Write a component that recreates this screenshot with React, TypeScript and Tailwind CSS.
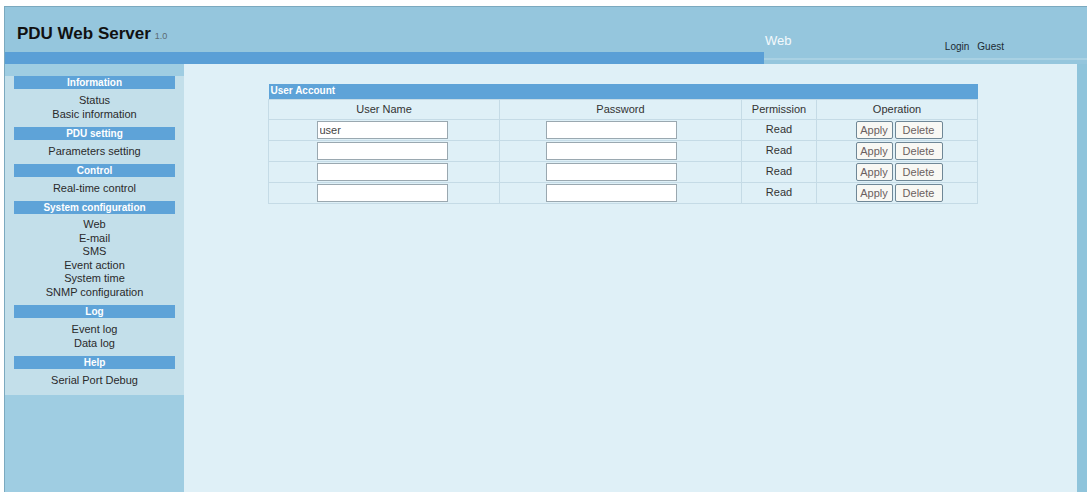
const menu: { title: string; items: string[]; lh: string }[] = [
  { title: 'Information', items: ['Status', 'Basic information'], lh: 'leading-[14px]' },
  { title: 'PDU setting', items: ['Parameters setting'], lh: 'leading-[14px]' },
  { title: 'Control', items: ['Real-time control'], lh: 'leading-[14px]' },
  {
    title: 'System configuration',
    items: ['Web', 'E-mail', 'SMS', 'Event action', 'System time', 'SNMP configuration'],
    lh: 'leading-[13.5px]',
  },
  { title: 'Log', items: ['Event log', 'Data log'], lh: 'leading-[14px]' },
  { title: 'Help', items: ['Serial Port Debug'], lh: 'leading-[14px]' },
];

const users = ['user', '', '', ''];

function Sidebar() {
  return (
    <div className="w-[179px] shrink-0 bg-[#9fcde2] pt-[12px]">
      <div className="bg-[#c3dfea] pb-[2px]">
        {menu.map((group) => (
          <div key={group.title}>
            <div className="mx-[9px] h-[13px] bg-[#5ea3d8] text-center text-[10px] leading-[13px] font-bold text-white">
              {group.title}
            </div>
            <div className={`pt-[4px] pb-[6px] text-center text-[11px] text-[#2a2a2a] ${group.lh}`}>
              {group.items.map((item) => (
                <div key={item}>{item}</div>
              ))}
            </div>
          </div>
        ))}
      </div>
    </div>
  );
}

function UserTable() {
  return (
    <table className="w-[710px] border-collapse text-[11px] text-[#333]">
      <thead>
        <tr>
          <th colSpan={4} className="h-[15px] bg-[#5ea3d8] px-[2px] text-left text-[10px] leading-[14px] font-bold text-white">
            User Account
          </th>
        </tr>
        <tr className="h-[20px]">
          <th className="w-[231px] border border-[#c5dbe6] font-normal">User Name</th>
          <th className="w-[242px] border border-[#c5dbe6] font-normal">Password</th>
          <th className="w-[75px] border border-[#c5dbe6] font-normal">Permission</th>
          <th className="border border-[#c5dbe6] font-normal">Operation</th>
        </tr>
      </thead>
      <tbody>
        {users.map((name, i) => (
          <tr key={i} className="h-[21px]">
            <td className="border border-[#c5dbe6] text-center">
              <input
                defaultValue={name}
                className="ml-[-4px] h-[18px] w-[131px] border border-[#9aa8b0] bg-white px-[2px] align-middle text-[11px] text-[#444] outline-none"
              />
            </td>
            <td className="border border-[#c5dbe6] text-center">
              <input
                type="password"
                className="ml-[-18px] h-[18px] w-[131px] border border-[#9aa8b0] bg-white align-middle outline-none"
              />
            </td>
            <td className="border border-[#c5dbe6] text-center">Read</td>
            <td className="border border-[#c5dbe6] text-center">
              <div className="flex justify-center gap-[2px] pl-[4px]">
                <button className="h-[18px] w-[37px] rounded-[2px] border border-[#6f8796] bg-[#f8f8f4] text-[11px] leading-[16px] text-[#6b5f5f]">
                  Apply
                </button>
                <button className="h-[18px] w-[48px] rounded-[2px] border border-[#6f8796] bg-[#f8f8f4] text-[11px] leading-[16px] text-[#6b5f5f]">
                  Delete
                </button>
              </div>
            </td>
          </tr>
        ))}
      </tbody>
    </table>
  );
}

export default function App() {
  return (
    <div
      className="h-[492px] w-[1087px] overflow-hidden bg-white pt-[6px] pl-[4px]"
      style={{ fontFamily: '"Liberation Sans", Arial, sans-serif' }}
    >
      <div className="flex h-full flex-col border-l border-t border-[#7ba9bf] bg-[#95c6dd]">
        {/* Header */}
        <div className="flex h-[45px] items-end">
          <div className="flex w-[760px] items-baseline pl-[12px] pb-[6px] leading-[20px]">
            <span className="text-[17px] font-bold text-[#111]">PDU Web Server</span>
            <span className="ml-[4px] text-[9px] text-[#5b6b74]">1.0</span>
          </div>
          <div className="pb-[2px] text-[13px] text-white/90">Web</div>
          <div className="ml-auto mr-[83px] flex gap-[8px] text-[10px] leading-[10px] text-[#1b2a33]">
            <span>Login</span>
            <span>Guest</span>
          </div>
        </div>
        {/* Blue bar */}
        <div className="flex h-[12px]">
          <div className="w-[759px] bg-[#5a9fd6]" />
          <div className="mb-[4px] flex-1 border-b-2 border-[#a9d1e3]" />
        </div>
        {/* Body */}
        <div className="flex flex-1">
          <Sidebar />
          <div className="flex-1 bg-[#dff0f7] pt-[20px] pl-[84px]">
            <UserTable />
          </div>
          <div className="w-[10px] bg-[#8fc4db]" />
        </div>
      </div>
    </div>
  );
}
